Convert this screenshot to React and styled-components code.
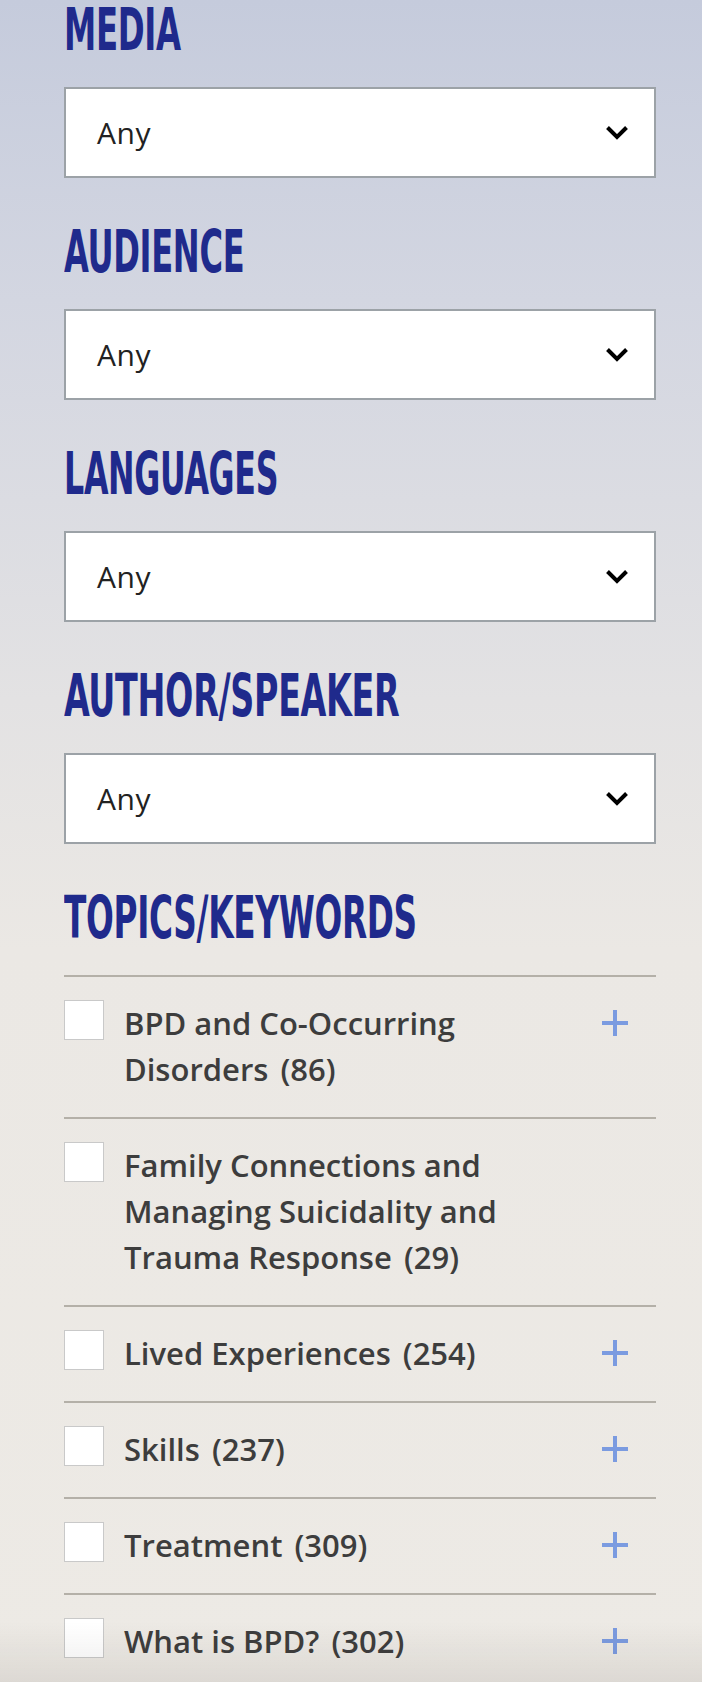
import React from "react"
import styled, { createGlobalStyle } from "styled-components"

const GlobalStyle = createGlobalStyle`
  html, body {
    margin: 0;
    padding: 0;
  }
  body {
    font-family: "Open Sans", "Lato", sans-serif;
    background: #ece9e4;
  }
`

const Page = styled.div`
  min-height: 1682px;
  box-sizing: border-box;
  padding: 0 46px 40px 64px;
  background: linear-gradient(
    to bottom,
    #c5cbdc 0px,
    #d3d6e1 300px,
    #e3e2e3 700px,
    #ebe8e4 950px,
    #edeae5 1682px
  );
`

const BottomFade = styled.div`
  position: fixed;
  left: 0;
  right: 0;
  bottom: 0;
  height: 60px;
  pointer-events: none;
  background: linear-gradient(to bottom, rgba(0, 0, 0, 0), rgba(60, 50, 40, 0.09));
`

const FilterGroup = styled.section`
  margin-bottom: 44px;
`

const Heading = styled.h2`
  margin: 0 0 28px 0;
  padding-top: 1px;
  height: 58px;
  font-family: "DejaVu Sans Condensed", "DejaVu Sans", sans-serif;
  font-weight: bold;
  font-size: 59px;
  line-height: 57px;
  color: #1f2a8c;
  white-space: nowrap;
`

const HeadingText = styled.span`
  display: inline-block;
  transform: scaleX(${(p) => p.$squeeze});
  transform-origin: left center;
  letter-spacing: -0.5px;
`

const SelectBox = styled.div`
  height: 91px;
  box-sizing: border-box;
  border: 2px solid #9ca2a7;
  background: #fff;
  display: flex;
  align-items: center;
  justify-content: space-between;
  padding: 0 25px 0 31px;
  font-family: "Open Sans", sans-serif;
  font-weight: 400;
  font-size: 30px;
  letter-spacing: 0.6px;
  color: #222;
`

const TopicList = styled.ul`
  list-style: none;
  margin: 0;
  padding: 0;
`

const TopicRow = styled.li`
  display: flex;
  align-items: flex-start;
  border-top: 2px solid #b4b0a8;
  padding: 23px 0 25px 0;
`

const Box = styled.span`
  flex: none;
  width: 40px;
  height: 40px;
  box-sizing: border-box;
  border: 1px solid #c9c9c9;
  background: #fff;
  margin-right: 20px;
`

const Label = styled.span`
  flex: 1;
  max-width: 450px;
  font-family: "Open Sans", sans-serif;
  font-weight: 600;
  font-size: 31px;
  line-height: 46px;
  color: #3d3d3d;
`

const Count = styled.span`
  margin-left: 4px;
`

const Expand = styled.span`
  flex: none;
  margin-left: auto;
  margin-right: 28px;
  height: 46px;
  display: flex;
  align-items: center;
`

const Chevron = () => (
  <svg width="24" height="15" viewBox="0 0 24 15">
    <polyline points="2.5,2.5 12,12 21.5,2.5" fill="none" stroke="#000" strokeWidth="4" />
  </svg>
)

const Plus = () => (
  <svg width="26" height="26" viewBox="0 0 26 26">
    <path d="M13 0 V26 M0 13 H26" stroke="#7b9be0" strokeWidth="4" />
  </svg>
)

const filters = [
  { title: "MEDIA", squeeze: 0.61 },
  { title: "AUDIENCE", squeeze: 0.605 },
  { title: "LANGUAGES", squeeze: 0.597 },
  { title: "AUTHOR/SPEAKER", squeeze: 0.628 },
]

const topics = [
  { name: "BPD and Co-Occurring Disorders", count: 86, more: true },
  { name: "Family Connections and Managing Suicidality and Trauma Response", count: 29, more: false },
  { name: "Lived Experiences", count: 254, more: true },
  { name: "Skills", count: 237, more: true },
  { name: "Treatment", count: 309, more: true },
  { name: "What is BPD?", count: 302, more: true },
]

export default function App() {
  return (
    <Page>
      <GlobalStyle />
      {filters.map((f) => (
        <FilterGroup key={f.title}>
          <Heading>
            <HeadingText $squeeze={f.squeeze}>{f.title}</HeadingText>
          </Heading>
          <SelectBox>
            <span>Any</span>
            <Chevron />
          </SelectBox>
        </FilterGroup>
      ))}
      <section>
        <Heading>
          <HeadingText $squeeze={0.616}>TOPICS/KEYWORDS</HeadingText>
        </Heading>
        <TopicList>
          {topics.map((t) => (
            <TopicRow key={t.name}>
              <Box />
              <Label>
                {t.name} <Count>({t.count})</Count>
              </Label>
              {t.more && (
                <Expand>
                  <Plus />
                </Expand>
              )}
            </TopicRow>
          ))}
        </TopicList>
      </section>
      <BottomFade />
    </Page>
  )
}
